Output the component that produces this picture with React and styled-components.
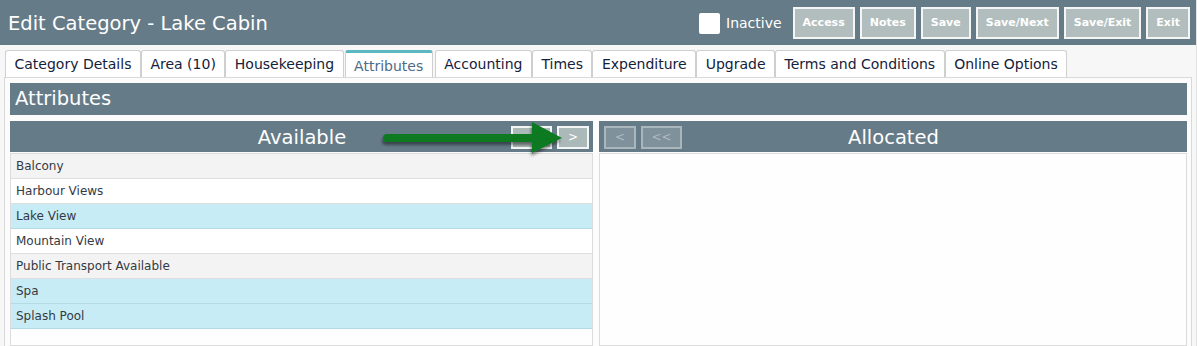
import React from "react";
import styled, { createGlobalStyle } from "styled-components";

const GlobalStyle = createGlobalStyle`
  html, body { margin: 0; padding: 0; overflow: hidden; }
  body {
    background: #f7f7f7;
    font-family: "DejaVu Sans", Verdana, sans-serif;
  }
`;

const SLATE = "#667b88";

const Page = styled.div`
  width: 1197px;
  height: 346px;
  display: flex;
  flex-direction: column;
  border-right: 1px solid #e2e2e2;
  box-sizing: border-box;
`;

const Header = styled.header`
  height: 45px;
  background: ${SLATE};
  display: flex;
  align-items: center;
  justify-content: space-between;
  padding: 0 6px 0 8px;
  flex-shrink: 0;
`;

const Title = styled.h1`
  margin: 0;
  font-size: 19.5px;
  font-weight: normal;
  color: #ffffff;
  padding-top: 1px;
`;

const Actions = styled.div`
  display: flex;
  align-items: center;
  gap: 5px;
`;

const InactiveLabel = styled.label`
  display: flex;
  align-items: center;
  gap: 6px;
  color: #ffffff;
  font-size: 14px;
  margin-right: 6px;
  padding-top: 1px;
`;

const CheckBox = styled.span`
  width: 21px;
  height: 21px;
  background: #ffffff;
  border-radius: 2px;
  display: inline-block;
`;

const HeaderButton = styled.button`
  height: 32px;
  padding: 0 8px;
  background: #b2bebd;
  border: 2px solid #f4f6f6;
  color: #ffffff;
  font-family: inherit;
  font-size: 11px;
  font-weight: bold;
  cursor: pointer;
`;

const TabBar = styled.nav`
  display: flex;
  gap: 0;
  padding: 5px 0 0 5px;
  flex-shrink: 0;
`;

const Tab = styled.div`
  height: 27px;
  box-sizing: border-box;
  padding: 0 8.5px;
  display: flex;
  align-items: center;
  font-size: 14px;
  background: #ffffff;
  color: ${(p) => (p.$active ? "#4f6b86" : "#14213a")};
  border: 1px solid #cfcfcf;
  border-top: ${(p) => (p.$active ? "3px solid #5bb8c1" : "1px solid #cfcfcf")};
  border-bottom: none;
  border-radius: 3px 3px 0 0;
  margin: ${(p) => (p.$active ? "0 2px 0 1px" : "0")};
  padding-top: ${(p) => (p.$active ? "1px" : "0")};
`;

const Panel = styled.section`
  flex: 1;
  margin: 0 4px 0 4px;
  border: 1px solid #d9d9d9;
  border-bottom: none;
  background: #fcfcfc;
  padding: 5px 4px 0 5px;
  display: flex;
  flex-direction: column;
  min-height: 0;
`;

const SectionBar = styled.div`
  height: 32px;
  background: ${SLATE};
  color: #ffffff;
  font-size: 19.5px;
  display: flex;
  align-items: center;
  padding: 0 0 1px 5px;
  box-sizing: border-box;
  flex-shrink: 0;
`;

const Columns = styled.div`
  margin-top: 6px;
  display: grid;
  grid-template-columns: 583px 1fr;
  gap: 6px;
  flex: 1;
  min-height: 0;
`;

const Column = styled.div`
  display: flex;
  flex-direction: column;
  min-height: 0;
`;

const ListHeader = styled.div`
  position: relative;
  height: 31px;
  background: ${SLATE};
  display: grid;
  grid-template-columns: 1fr auto 1fr;
  align-items: center;
  padding: 0 4px 0 5px;
  flex-shrink: 0;
`;

const ListTitle = styled.div`
  grid-column: 2;
  color: #ffffff;
  font-size: 19.5px;
  padding-top: 2px;
`;

const ButtonGroup = styled.div`
  grid-column: ${(p) => (p.$side === "right" ? 3 : 1)};
  grid-row: 1;
  justify-self: ${(p) => (p.$side === "right" ? "end" : "start")};
  display: flex;
  gap: 5px;
  padding-top: 1px;
`;

const MoveButton = styled.button`
  height: 23px;
  width: ${(p) => (p.$double ? "41px" : "32px")};
  box-sizing: border-box;
  padding: 0;
  font-family: inherit;
  font-size: 12px;
  background: ${(p) => (p.$disabled ? "#7f929c" : "#abb9b9")};
  border: 2px solid ${(p) => (p.$disabled ? "#a9b6bc" : "#f4f6f6")};
  color: ${(p) => (p.$disabled ? "#aebbc1" : "#ffffff")};
  cursor: ${(p) => (p.$disabled ? "default" : "pointer")};
`;

const ListBox = styled.div`
  flex: 1;
  border: 1px solid #dcdcdc;
  background: #fefefe;
  margin-top: 1px;
`;

const Row = styled.div`
  height: 25px;
  box-sizing: border-box;
  display: flex;
  align-items: center;
  padding: 0 0 0 5px;
  font-size: 12px;
  color: #333a44;
  background: ${(p) => (p.$selected ? "#c8ecf5" : p.$odd ? "#ffffff" : "#f3f3f3")};
  border-bottom: 1px solid ${(p) => (p.$selected ? "#b4dbe5" : "#dedede")};
`;

const ArrowOverlay = styled.svg`
  position: absolute;
  left: 360px;
  top: -2px;
  width: 205px;
  height: 40px;
  pointer-events: none;
  overflow: visible;
`;

const tabs = [
  "Category Details",
  "Area (10)",
  "Housekeeping",
  "Attributes",
  "Accounting",
  "Times",
  "Expenditure",
  "Upgrade",
  "Terms and Conditions",
  "Online Options",
];

const available = [
  { name: "Balcony" },
  { name: "Harbour Views" },
  { name: "Lake View", selected: true },
  { name: "Mountain View" },
  { name: "Public Transport Available" },
  { name: "Spa", selected: true },
  { name: "Splash Pool", selected: true },
];

function GreenArrow() {
  return (
    <ArrowOverlay viewBox="0 0 205 40">
      <defs>
        <filter id="arrowShadow" x="-10%" y="-30%" width="130%" height="180%">
          <feDropShadow dx="-1" dy="3" stdDeviation="1.6" floodColor="#000" floodOpacity="0.45" />
        </filter>
      </defs>
      <g filter="url(#arrowShadow)" fill="#117a22">
        <path d="M17 15 H164 V23 H17 A4 4 0 0 1 17 15 Z" />
        <polygon points="162,3 192,19 162,34" />
      </g>
    </ArrowOverlay>
  );
}

export default function App() {
  return (
    <>
      <GlobalStyle />
      <Page>
        <Header>
          <Title>Edit Category - Lake Cabin</Title>
          <Actions>
            <InactiveLabel>
              <CheckBox />
              Inactive
            </InactiveLabel>
            {["Access", "Notes", "Save", "Save/Next", "Save/Exit", "Exit"].map((b) => (
              <HeaderButton key={b}>{b}</HeaderButton>
            ))}
          </Actions>
        </Header>
        <TabBar>
          {tabs.map((t) => (
            <Tab key={t} $active={t === "Attributes"}>
              {t}
            </Tab>
          ))}
        </TabBar>
        <Panel>
          <SectionBar>Attributes</SectionBar>
          <Columns>
            <Column>
              <ListHeader>
                <ListTitle>Available</ListTitle>
                <ButtonGroup $side="right">
                  <MoveButton $double>&gt;&gt;</MoveButton>
                  <MoveButton>&gt;</MoveButton>
                </ButtonGroup>
                <GreenArrow />
              </ListHeader>
              <ListBox>
                {available.map((a, i) => (
                  <Row key={a.name} $odd={i % 2 === 1} $selected={a.selected}>
                    {a.name}
                  </Row>
                ))}
              </ListBox>
            </Column>
            <Column>
              <ListHeader>
                <ButtonGroup $side="left">
                  <MoveButton $disabled>&lt;</MoveButton>
                  <MoveButton $disabled $double>&lt;&lt;</MoveButton>
                </ButtonGroup>
                <ListTitle>Allocated</ListTitle>
              </ListHeader>
              <ListBox />
            </Column>
          </Columns>
        </Panel>
      </Page>
    </>
  );
}
